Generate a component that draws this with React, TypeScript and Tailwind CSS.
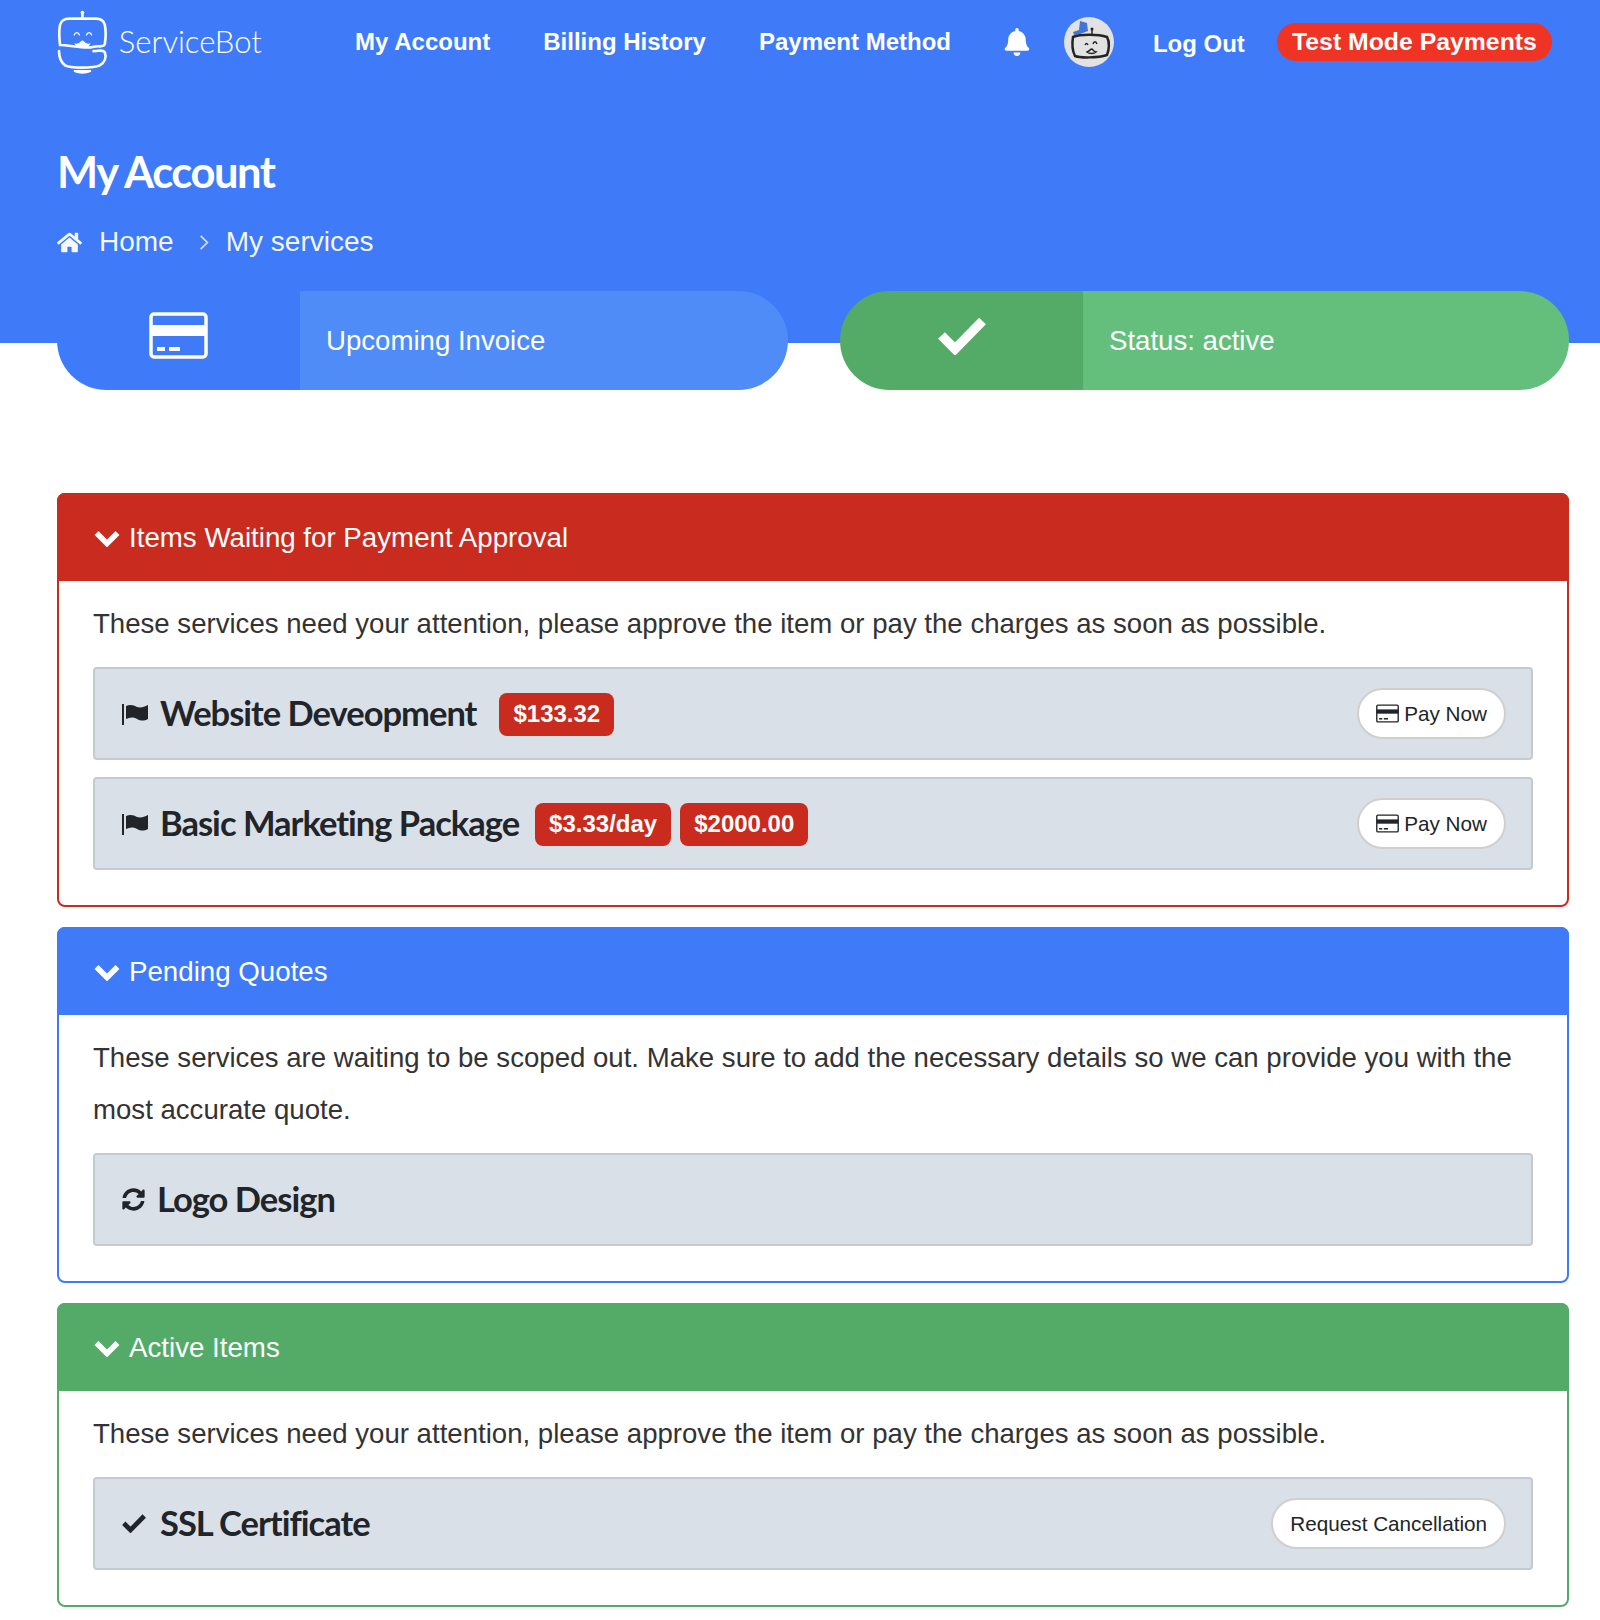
import type { ReactNode } from 'react';
import { FaBell, FaHome, FaSyncAlt } from 'react-icons/fa';

const SANS = "font-['Liberation_Sans',Arial,sans-serif]";
const LATO = "font-['Lato','Noto_Sans',sans-serif]";

function CardIcon({ className = '' }: { className?: string }) {
  return (
    <svg viewBox="0 0 59 47" className={className} fill="none">
      <rect x="2" y="2" width="55" height="43" rx="3" stroke="currentColor" strokeWidth="3.5" />
      <rect x="2" y="13" width="55" height="11" fill="currentColor" />
      <rect x="8" y="35" width="8" height="4" fill="currentColor" />
      <rect x="20" y="35" width="11" height="4" fill="currentColor" />
    </svg>
  );
}

function CheckMark({ className = '' }: { className?: string }) {
  return (
    <svg viewBox="0 0 48 38" className={className} fill="none" stroke="currentColor" strokeWidth="9.5">
      <path d="M3.5 18.5L17 32L44.5 4" />
    </svg>
  );
}

function Chevron() {
  return (
    <svg viewBox="0 0 26 18" className="mr-[9px] h-[18px] w-[26px]" fill="none" stroke="currentColor" strokeWidth="5.5">
      <path d="M2.5 4L13 14.5L23.5 4" />
    </svg>
  );
}

function FlagIcon() {
  return (
    <svg viewBox="0 0 26 22" className="mr-[12px] h-[22px] w-[26px]" fill="currentColor">
      <rect x="0" y="1" width="2" height="21" />
      <path d="M4 3C8 1 12 2 15 4C19 5 22 4 26 2V16C22 18 19 18 15 16C12 14 8 14 4 16Z" />
    </svg>
  );
}

function Logo() {
  return (
    <svg viewBox="0 0 50 64" className="h-[66px] w-[51px]" fill="none" stroke="white" strokeWidth="2.6" strokeLinecap="round">
      <circle cx="25" cy="3" r="1.8" fill="white" stroke="none" />
      <path d="M25 4v5" />
      <path d="M3 35C2 27 2 20 3 15C4 11 8 9 12 9H38C43 9 46 11 47 15C48 20 48 28 47 34C46 38 41 35 35 37C28 39 12 35 3 35Z" />
      <path d="M2 41C2 47 3 51 8 55C13 58 36 58 42 55C47 52 49 47 47 42C45 39 42 41 36 41" />
      <path d="M17 25c1-3 4-3 5 0M29 25c1-3 4-3 5 0" strokeWidth="1.4" />
      <path d="M18 34c3 1 5-1 7-3c2 2 4 4 7 3c-2 4-5 3-7 1c-2 2-5 3-7-1Z" fill="white" strokeWidth="1" />
      <path d="M17 61c5 2 11 2 16 0l0-1h-16Z" fill="white" strokeWidth="1" />
    </svg>
  );
}

function Avatar() {
  return (
    <svg viewBox="0 0 50 50" className="h-[50px] w-[50px] shrink-0">
      <circle cx="25" cy="25" r="25" fill="#e2e2e2" />
      <path d="M9 15l6-2l1-9l7 2l1 8l-8 3l-6 1Z" fill="#3f74d8" />
      <path d="M9 20C16 17 34 17 43 20C46 25 45 33 43 38C34 41 16 41 11 39C8 33 8 26 9 20Z" fill="none" stroke="#242424" strokeWidth="2.5" />
      <path d="M28 17v-4" stroke="#242424" strokeWidth="1.5" />
      <circle cx="28" cy="12" r="1.5" fill="#242424" />
      <path d="M21 28c1-2 2-2 3 0M29 27c1-3 3-3 4 0M23 35c3-1 3-3 5-3c1 1 2 3 4 3c-2 2-7 2-9 0Z" fill="none" stroke="#242424" strokeWidth="1.5" />
    </svg>
  );
}

function StatPill({ icon, label, iconBg, labelBg, className = '' }: { icon: ReactNode; label: string; iconBg: string; labelBg: string; className?: string }) {
  return (
    <div className={'flex h-[99px] overflow-hidden rounded-[50px] text-white ' + className}>
      <div className={'flex w-[243px] shrink-0 items-center justify-center pb-[10px] ' + iconBg}>{icon}</div>
      <div className={'flex flex-1 items-center pl-[26px] text-[27.6px] ' + labelBg}>{label}</div>
    </div>
  );
}

function Panel({ title, head, border, children }: { title: string; head: string; border: string; children: ReactNode }) {
  return (
    <section className={'rounded-lg border-2 ' + border}>
      <div className={'-m-[2px] flex h-[88px] items-center rounded-t-lg pl-[37px] pt-[1px] text-[27.7px] text-white ' + head}>
        <Chevron />
        {title}
      </div>
      <div className="px-[34px] pb-[35px] pt-[19px]">{children}</div>
    </section>
  );
}

function Note({ children }: { children: ReactNode }) {
  return <p className="mb-[17px] text-[27.6px] leading-[52px] text-[#333]">{children}</p>;
}

function Badge({ children }: { children: ReactNode }) {
  return <span className="flex h-[43px] items-center rounded-lg bg-[#c92b1e] px-[14px] text-[24px] font-bold text-white">{children}</span>;
}

function Item({ icon, title, badges, badgeGap = 'ml-[16px]', action }: { icon: ReactNode; title: string; badges?: string[]; badgeGap?: string; action?: ReactNode }) {
  return (
    <div className="flex h-[93px] items-center rounded border-2 border-[#c3cad4] bg-[#dae0e8] pl-[27px] pr-[25px] text-[#212529]">
      {icon}
      <h3 className={LATO + ' -mt-[1px] text-[34.5px] font-bold tracking-[-1px] [font-variant-ligatures:none]'}>{title}</h3>
      <div className={'mt-[1px] flex gap-[9px] ' + badgeGap}>
        {badges?.map((b) => <Badge key={b}>{b}</Badge>)}
      </div>
      {action && <div className="ml-auto">{action}</div>}
    </div>
  );
}

function PillButton({ children }: { children: ReactNode }) {
  return (
    <button className="flex h-[51px] items-center gap-[5px] rounded-full border-2 border-[#cfcfcf] bg-white px-[17px] text-[20.7px] text-[#212529]">
      {children}
    </button>
  );
}

const PayNow = (
  <PillButton>
    <CardIcon className="h-[19px] w-[23px]" />
    Pay Now
  </PillButton>
);

const flag = <FlagIcon />;
const attention = 'These services need your attention, please approve the item or pay the charges as soon as possible.';

export default function App() {
  return (
    <div className={SANS + ' min-h-[1620px] bg-white'}>
      <header className="h-[343px] bg-[#3f7bf9] pl-[57px] pr-[48px] text-white">
        <nav className="flex h-[83px] items-center whitespace-nowrap text-[24px] font-bold">
          <Logo />
          <span className={LATO + ' ml-[11px] w-[237px] text-[31px] font-light'}>ServiceBot</span>
          <a>My Account</a>
          <a className="ml-[53px]">Billing History</a>
          <a className="ml-[53px]">Payment Method</a>
          <FaBell className="ml-[53px] mr-[34px] h-[28px] w-[26px]" />
          <Avatar />
          <a className="ml-[39px] mt-[5px]">Log Out</a>
          <span className="ml-[32px] flex h-[38px] w-[276px] items-center justify-center rounded-full bg-[#ef3325] text-[24.8px]">Test Mode Payments</span>
        </nav>
        <h1 className={LATO + ' mt-[65px] text-[43.5px] font-bold leading-[46px] tracking-[-1.5px]'}>My Account</h1>
        <div className="mt-[27px] flex items-center text-[28px] font-normal text-white/95">
          <FaHome className="mr-[17px] h-[25px] w-[25px]" />
          <span>Home</span>
          <svg viewBox="0 0 12 20" className="ml-[25px] mr-[17px] h-[17px] w-[10px]" fill="none" stroke="#d7dde8" strokeWidth="2"><path d="M2 2l8 8l-8 8" /></svg>
          <span>My services</span>
        </div>
      </header>

      <main className="pl-[57px] pr-[31px]">
        <div className="-mt-[52px] flex gap-[52px]">
          <StatPill
            className="w-[731px]"
            iconBg="bg-[#3f7bf9]"
            labelBg="bg-[#4f8cf8]"
            label="Upcoming Invoice"
            icon={<CardIcon className="h-[47px] w-[59px]" />}
          />
          <StatPill
            className="flex-1"
            iconBg="bg-[#54ab67]"
            labelBg="bg-[#63bf7b]"
            label="Status: active"
            icon={<CheckMark className="h-[38px] w-[48px]" />}
          />
        </div>

        <div className="mt-[103px] flex flex-col gap-[20px]">
          <Panel title="Items Waiting for Payment Approval" head="bg-[#c92b1e]" border="border-[#c92b1e]">
            <Note>{attention}</Note>
            <div className="flex flex-col gap-[17px]">
              <Item icon={flag} title="Website Deveopment" badges={['$133.32']} badgeGap="ml-[23px]" action={PayNow} />
              <Item icon={flag} title="Basic Marketing Package" badges={['$3.33/day', '$2000.00']} action={PayNow} />
            </div>
          </Panel>

          <Panel title="Pending Quotes" head="bg-[#3f7bf9]" border="border-[#3f7bf9]">
            <Note>These services are waiting to be scoped out. Make sure to add the necessary details so we can provide you with the most accurate quote.</Note>
            <Item icon={<FaSyncAlt className="mr-[12px] h-[23px] w-[23px]" />} title="Logo Design" />
          </Panel>

          <Panel title="Active Items" head="bg-[#54ab67]" border="border-[#54ab67]">
            <Note>{attention}</Note>
            <Item
              icon={<CheckMark className="mr-[14px] h-[19px] w-[24px]" />}
              title="SSL Certificate"
              action={<PillButton>Request Cancellation</PillButton>}
            />
          </Panel>
        </div>
      </main>
    </div>
  );
}
